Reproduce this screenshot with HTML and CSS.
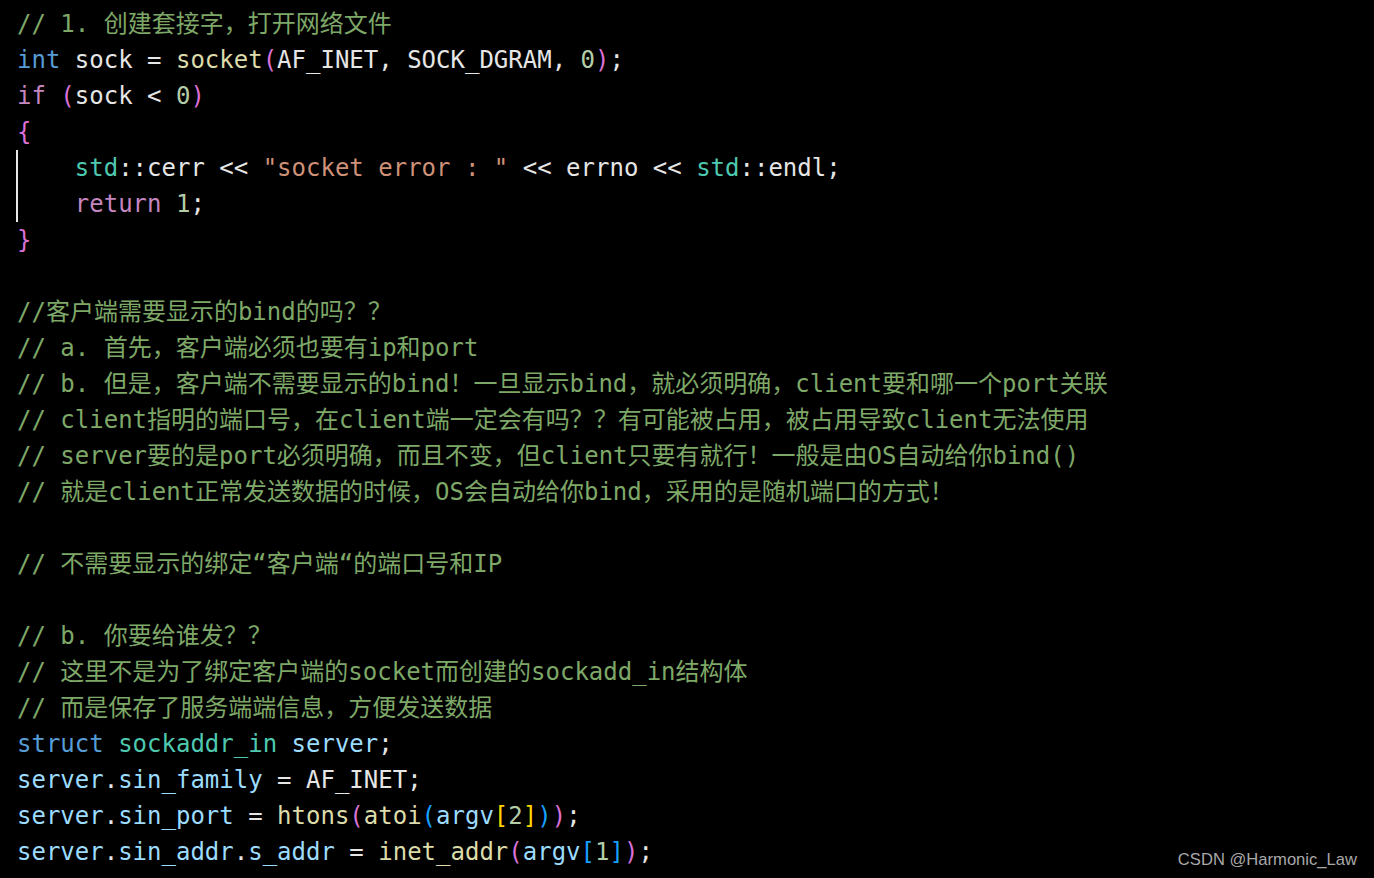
FILE: index.html
```html
<!DOCTYPE html>
<html lang="zh-CN">
<head>
<meta charset="utf-8">
<title>code</title>
<link rel="stylesheet" href="styles.css">
</head>
<body>
<main class="editor">
<pre class="code"><span class="line"><span class="c">// 1. 创建套接字，打开网络文件</span></span>
<span class="line"><span class="k">int</span> sock = <span class="f">socket</span><span class="p">(</span>AF_INET, SOCK_DGRAM, <span class="n">0</span><span class="p">)</span>;</span>
<span class="line"><span class="kc">if</span> <span class="p">(</span>sock &lt; <span class="n">0</span><span class="p">)</span></span>
<span class="line"><span class="p">{</span></span>
<span class="line guide">    <span class="t">std</span>::cerr &lt;&lt; <span class="s">"socket error : "</span> &lt;&lt; errno &lt;&lt; <span class="t">std</span>::endl;</span>
<span class="line guide">    <span class="kc">return</span> <span class="n">1</span>;</span>
<span class="line"><span class="p">}</span></span>
<span class="line"> </span>
<span class="line"><span class="c">//客户端需要显示的bind的吗？？</span></span>
<span class="line"><span class="c">// a. 首先，客户端必须也要有ip和port</span></span>
<span class="line"><span class="c">// b. 但是，客户端不需要显示的bind！一旦显示bind，就必须明确，client要和哪一个port关联</span></span>
<span class="line"><span class="c">// client指明的端口号，在client端一定会有吗？？有可能被占用，被占用导致client无法使用</span></span>
<span class="line"><span class="c">// server要的是port必须明确，而且不变，但client只要有就行！一般是由OS自动给你bind()</span></span>
<span class="line"><span class="c">// 就是client正常发送数据的时候，OS会自动给你bind，采用的是随机端口的方式！</span></span>
<span class="line"> </span>
<span class="line"><span class="c">// 不需要显示的绑定“客户端“的端口号和IP</span></span>
<span class="line"> </span>
<span class="line"><span class="c">// b. 你要给谁发？？</span></span>
<span class="line"><span class="c">// 这里不是为了绑定客户端的socket而创建的sockadd_in结构体</span></span>
<span class="line"><span class="c">// 而是保存了服务端端信息，方便发送数据</span></span>
<span class="line"><span class="k">struct</span> <span class="t">sockaddr_in</span> <span class="v">server</span>;</span>
<span class="line"><span class="v">server</span>.<span class="v">sin_family</span> = AF_INET;</span>
<span class="line"><span class="v">server</span>.<span class="v">sin_port</span> = <span class="f">htons</span><span class="p">(</span><span class="f">atoi</span><span class="b">(</span><span class="v">argv</span><span class="g">[</span><span class="n">2</span><span class="g">]</span><span class="b">)</span><span class="p">)</span>;</span>
<span class="line"><span class="v">server</span>.<span class="v">sin_addr</span>.<span class="v">s_addr</span> = <span class="f">inet_addr</span><span class="p">(</span><span class="v">argv</span><span class="b">[</span><span class="n">1</span><span class="b">]</span><span class="p">)</span>;</span></pre>
<div class="watermark">CSDN @Harmonic_Law</div>
</main>
</body>
</html>
```
FILE: styles.css
```css
html, body {
  margin: 0;
  padding: 0;
  background: #000;
}
.editor {
  position: relative;
  width: 1374px;
  height: 878px;
  overflow: hidden;
  background: #000;
}
.code {
  margin: 0;
  padding: 6px 0 0 17px;
  font-family: "DejaVu Sans Mono", "Noto Sans CJK SC", monospace;
  font-size: 24px;
  line-height: 36px;
  color: #e6e6e6;
  white-space: pre;
  display: flex;
  flex-direction: column;
}
.code > .line {
  display: block;
  height: 36px;
}
.code > .line.guide {
  box-shadow: inset 2px 0 0 #e8e8e8;
  margin-left: -1px;
  padding-left: 1px;
}
.c { color: #7ea868; }
.k { color: #569cd6; }
.kc { color: #c586c0; }
.f { color: #dcdcaa; }
.p { color: #da70d6; }
.b { color: #179fff; }
.g { color: #ffd700; }
.n { color: #b5cea8; }
.s { color: #ce9178; }
.t { color: #4ec9b0; }
.v { color: #9cdcfe; }
.watermark {
  position: absolute;
  right: 17px;
  bottom: 8px;
  font-family: "Liberation Sans", Arial, sans-serif;
  font-size: 16.6px;
  color: #a8a8a8;
}
```
